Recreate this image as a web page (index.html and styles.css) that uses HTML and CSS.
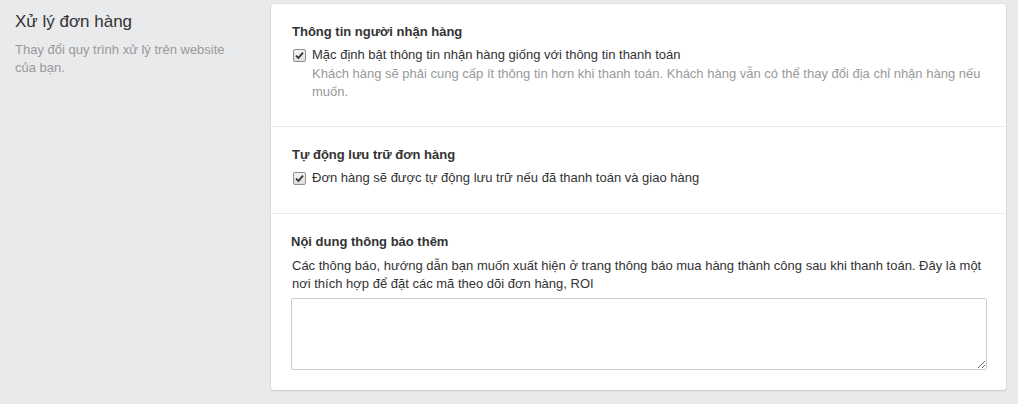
FILE: index.html
```html
<!DOCTYPE html>
<html lang="vi">
<head>
<meta charset="utf-8">
<link rel="stylesheet" href="styles.css">
</head>
<body>
<div class="page">
  <div class="aside">
    <h2 class="aside-title">Xử lý đơn hàng</h2>
    <p class="aside-desc">Thay đổi quy trình xử lý trên website của bạn.</p>
  </div>
  <div class="card">
    <div class="section sec-1">
      <div class="heading">Thông tin người nhận hàng</div>
      <label class="check-row">
        <span class="checkbox"><svg width="9" height="9" viewBox="0 0 9 9"><path d="M1 4.6 L3.4 7 L8 1.6" fill="none" stroke="#333" stroke-width="1.8"/></svg></span>
        <span class="check-text">
          <span class="check-label">Mặc định bật thông tin nhận hàng giống với thông tin thanh toán</span>
          <span class="check-help">Khách hàng sẽ phải cung cấp ít thông tin hơn khi thanh toán. Khách hàng vẫn có thể thay đổi địa chỉ nhận hàng nếu muốn.</span>
        </span>
      </label>
    </div>
    <div class="section sec-2">
      <div class="heading">Tự động lưu trữ đơn hàng</div>
      <label class="check-row">
        <span class="checkbox"><svg width="9" height="9" viewBox="0 0 9 9"><path d="M1 4.6 L3.4 7 L8 1.6" fill="none" stroke="#333" stroke-width="1.8"/></svg></span>
        <span class="check-text">
          <span class="check-label">Đơn hàng sẽ được tự động lưu trữ nếu đã thanh toán và giao hàng</span>
        </span>
      </label>
    </div>
    <div class="section sec-3">
      <div class="heading">Nội dung thông báo thêm</div>
      <p class="desc">Các thông báo, hướng dẫn bạn muốn xuất hiện ở trang thông báo mua hàng thành công sau khi thanh toán. Đây là một nơi thích hợp để đặt các mã theo dõi đơn hàng, ROI</p>
      <textarea class="note"></textarea>
    </div>
  </div>
</div>
</body>
</html>
```

FILE: styles.css
```css
* { box-sizing: border-box; }
html, body { margin: 0; padding: 0; }
body {
  background: #e9eaec;
  font-family: "Liberation Sans", Arial, sans-serif;
  font-size: 13px;
  line-height: 18px;
  color: #333;
  width: 1018px;
  height: 404px;
  overflow: hidden;
}
.page {
  display: flex;
  align-items: flex-start;
  padding-top: 4px;
}
.aside {
  width: 271px;
  flex: none;
  padding: 7px 40px 0 15px;
}
.aside-title {
  margin: 0;
  font-size: 17px;
  font-weight: normal;
  line-height: 22px;
  color: #333;
}
.aside-desc {
  margin: 8px 0 0;
  color: #999;
  font-size: 13px;
  line-height: 18px;
}
.card {
  width: 735px;
  flex: none;
  background: #fff;
  border-radius: 3px;
  box-shadow: 0 1px 2px rgba(0,0,0,0.12), 0 0 0 1px rgba(0,0,0,0.03);
}
.section {
  padding: 19px 21px 25px;
  border-top: 1px solid #ebebeb;
}
.section:first-child { border-top: none; }
.sec-2 { padding: 19px 21px 26px; }
.sec-3 { padding: 19px 19px 20px 20px; }
.heading {
  font-weight: bold;
  color: #333;
  line-height: 18px;
}
.check-row {
  display: flex;
  align-items: flex-start;
  margin-top: 5px;
  padding-left: 1px;
}
.checkbox {
  flex: none;
  width: 13px;
  height: 13px;
  margin-top: 3px;
  margin-right: 6px;
  border: 1px solid #8f8f8f;
  border-radius: 2px;
  background: linear-gradient(#f4f4f4, #dedede);
  display: flex;
  align-items: center;
  justify-content: center;
}
.check-text { display: flex; flex-direction: column; }
.check-label { color: #333; }
.check-help { color: #999; margin-top: 1px; }
.desc {
  margin: 6px 0 0 1px;
  color: #333;
}
.note {
  display: block;
  width: 696px;
  height: 72px;
  margin: 5px 0 0 0;
  border: 1px solid #ccc;
  border-radius: 2px;
  font-family: inherit;
  font-size: 13px;
  resize: vertical;
}
```
